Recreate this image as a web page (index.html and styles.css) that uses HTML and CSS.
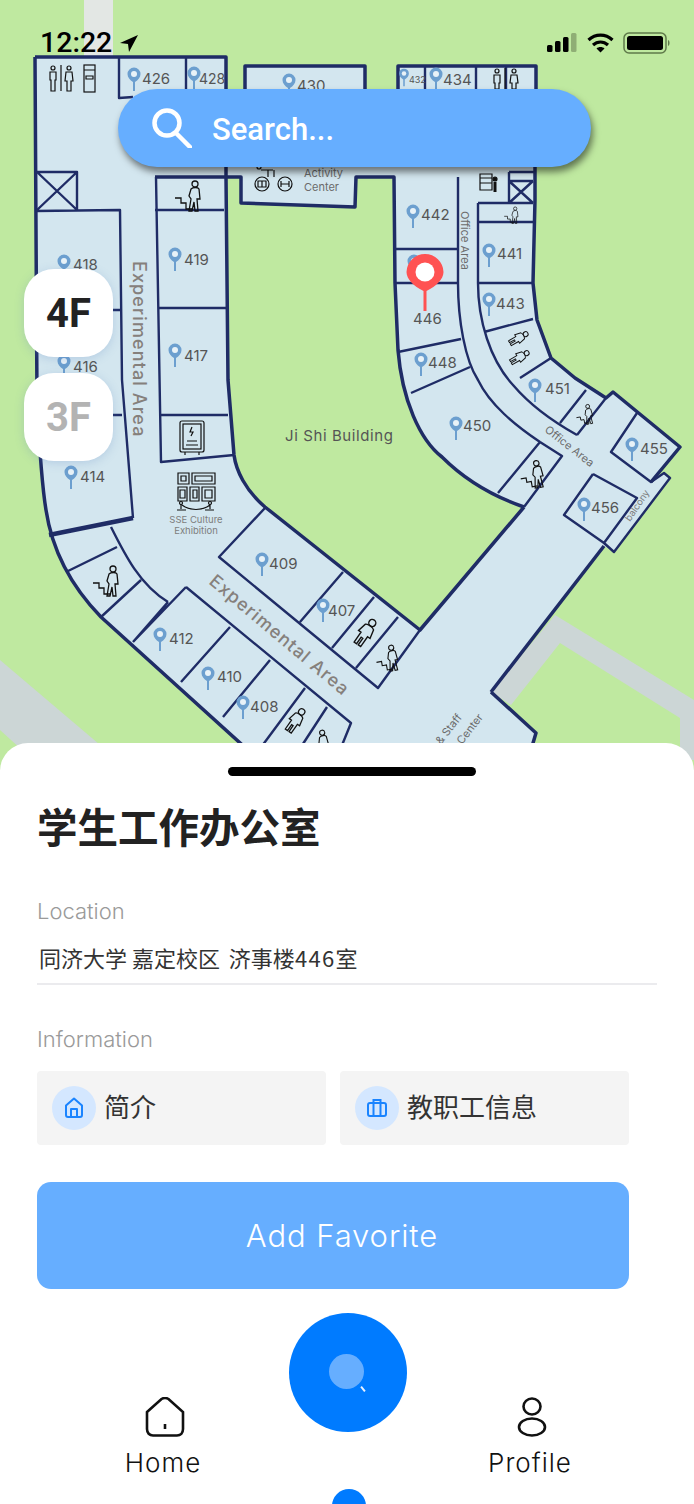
FILE: index.html
```html
<!DOCTYPE html>
<html lang="zh-CN">
<head>
    <meta charset="UTF-8">
    <meta name="viewport" content="width=device-width, initial-scale=1.0">
    <title>Ji Shi Building</title>
    <link rel="stylesheet" href="styles.css">
</head>
<body>
<div class="page">
    <div class="map-area">
        <svg class="map" width="694" height="770" viewBox="0 0 694 770">
            <defs>
                <g id="pin">
                    <path d="M0 -8.500a6.500 6.500 0 0 1 6.500 6.500c0 3.500-2.500 6-5.500 8v9h-2v-9c-3-2-5.500-4.500-5.500-8a6.500 6.500 0 0 1 6.500-6.500z" fill="#6c9fcf"/>
                    <circle cx="0" cy="-2" r="3" fill="#e8f2f8"/>
                </g>
                <g id="stairs" fill="none" stroke="#111" stroke-width="1.300">
                    <path d="M-16 6h6v5h5v6h6"/>
                    <circle cx="4" cy="-8" r="3"/>
                    <path d="M0 -3c2-2 7-2 8 0l1 10h-3l1 12h-3l-1-9-2 9h-3l2-12-2-3z"/>
                </g>
                <g id="person" fill="none" stroke="#111" stroke-width="1.400">
                    <circle cx="0" cy="-11" r="3.500"/>
                    <path d="M-5 -6c2-2 8-2 10 0l2 9h-3l0 12h-3v-8h-2v8h-3v-12h-3z"/>
                </g>
            </defs>

            <rect width="694" height="770" fill="#bfe9a0"/>
            <path d="M84 0h29v60h-29z" fill="#e3e7e4"/>
            <path d="M0 660l106 90h-84l-22-20z" fill="#ccd6d6"/>
            <path d="M555 615l139 85v60h-14v-42l-120-75-49 62-20-13z" fill="#ccd6d6"/>

            <!-- building -->
            <path class="floor" d="M35 57H226V120H245V66H365V120H398V66H536V200L533 283L537 320L551 358L575 378L606 398L613 392L680 447L651 482L664 473L670 478L614 552L604 546L491 692L536 733L525 770H270L101 617C70 585 52 550 46 510C41 480 39 440 37 400L35 57Z"/>
            <path d="M226 177H241V203L355 207L356 177H394L395 283L398 350C402 400 420 440 442 457C465 480 495 497 524 507L420 630L265 507C245 490 236 470 234 455C228 420 228 300 226 177Z" fill="#bfe9a0"/>
            <path d="M241 120H394V177H356L355 207L241 203V177H226V120Z" fill="#d3e6ef"/>

            <g class="wall">
                <path d="M35 57H226V100M245 100V66H365V100M398 100V66H536V100"/>
                <path d="M35 57L37 400C39 440 41 480 46 510C52 550 70 585 101 617L270 770"/>
                <path d="M226 100V177L228 380L234 455C236 470 245 490 265 507L420 630L524 507"/>
                <path d="M155 177H241V203L355 207L356 177H394L395 283L398 350C402 400 420 440 442 457C465 480 495 497 524 507"/>
                <path d="M535 165V200L533 283L537 320L551 358L575 378L606 398L613 392L680 447L651 482"/>
                <path d="M491 692L604 546M491 692L536 733L525 770"/>
                <path d="M49 535L133 518" stroke-width="4.500"/>
            </g>
            <g class="line">
                <path d="M119 58V98L133 97M186 58V90M425 66V90M476 66V90M506 66V90"/>
                <path d="M35 172H77V210M35 211L120 210L122 380L133 518M37 172L77 210M77 172L37 210M113 310H120M113 415H122"/>
                <path d="M156 177L161 462L234 455M155 210H224M159 308H226M160 415H228"/>
                <path d="M396 249H458M396 283H458M458 177V283C458 320 465 360 478 380C490 405 515 425 540 442L562 456L524 507M398 352L461 339M411 393L470 367M498 493L540 442"/>
                <path d="M509 172H535M509 181H533M509 172V203M478 203H533M509 181L533 203M533 181L509 203M478 203V283C478 320 490 360 513 385C530 405 550 420 577 435M478 222H533M478 283H533M484 332L533 319M520 378L551 358M560 423L586 390M577 435L606 398"/>
                <path d="M637 413L611 452L651 482L664 473L670 478L614 552L604 543M593 474L564 515L604 543L637 498L593 474"/>
                <path d="M265 508L219 557L378 688L420 630M343 572L300 622M374 597L332 648M398 617L356 668"/>
                <path d="M111 527C125 555 140 585 168 602M66 572L117 547M101 617L141 580M168 602L133 642M186 587L133 642M186 587L351 723L336 760M230 627L181 682M270 660L223 717M305 688L259 750M327 707L299 750"/>
            </g>

            <use href="#pin" x="134" y="76"/><use href="#pin" x="194" y="75"/><use href="#pin" x="289" y="82"/>
            <use href="#pin" transform="translate(404 75) scale(.75)"/><use href="#pin" x="436" y="76"/>
            <use href="#pin" x="413" y="213"/><use href="#pin" x="414" y="263"/><use href="#pin" x="489" y="252"/>
            <use href="#pin" x="489" y="301"/><use href="#pin" x="421" y="361"/><use href="#pin" x="64" y="263"/>
            <use href="#pin" x="64" y="363"/><use href="#pin" x="175" y="256"/><use href="#pin" x="175" y="352"/>
            <use href="#pin" x="535" y="387"/><use href="#pin" x="456" y="425"/><use href="#pin" x="632" y="446"/>
            <use href="#pin" x="584" y="506"/><use href="#pin" x="71" y="474"/><use href="#pin" x="262" y="561"/>
            <use href="#pin" x="323" y="607"/><use href="#pin" x="160" y="636"/><use href="#pin" x="208" y="675"/>
            <use href="#pin" x="243" y="704"/>

            <g class="room-no">
                <text x="142" y="84">426</text><text class="no-narrow" x="199" y="84">428</text><text x="297" y="91">430</text>
                <text class="no-tiny" x="409" y="83">432</text><text x="443" y="85">434</text><text x="421" y="220">442</text>
                <text x="413" y="324">446</text><text x="497" y="259">441</text><text x="496" y="309">443</text>
                <text x="428" y="368">448</text><text x="73" y="270">418</text><text x="73" y="372">416</text>
                <text x="184" y="265">419</text><text x="184" y="361">417</text><text x="545" y="394">451</text>
                <text x="463" y="431">450</text><text x="640" y="454">455</text><text x="591" y="513">456</text>
                <text x="80" y="482">414</text><text x="269" y="569">409</text><text x="328" y="616">407</text>
                <text x="169" y="644">412</text><text x="217" y="682">410</text><text x="250" y="712">408</text>
            </g>

            <text class="area-big" transform="translate(133 261) rotate(90)">Experimental Area</text>
            <text class="area-big" transform="translate(208 583) rotate(40)">Experimental Area</text>
            <text class="area-small" transform="translate(461 211) rotate(90)">Office Area</text>
            <text class="area-small" transform="translate(544 431) rotate(38)">Office Area</text>
            <text class="area-tiny" transform="translate(630 522) rotate(-56)">balcony</text>
            <text class="area-small" transform="translate(441 745) rotate(-52)">&amp; Staff</text>
            <text class="area-small" transform="translate(462 745) rotate(-52)">Center</text>
            <text class="area-name" x="285" y="441">Ji Shi Building</text>
            <text class="area-small" x="304" y="177">Activity</text>
            <text class="area-small" x="304" y="191">Center</text>
            <text class="area-tiny" x="196" y="523" text-anchor="middle">SSE Culture</text>
            <text class="area-tiny" x="196" y="534" text-anchor="middle">Exhibition</text>

            <!-- toilets at the top -->
            <g class="glyph">
                <circle cx="53" cy="68" r="2"/><path d="M50 72h6v8h-1v11h-4v-11h-1zM61 65v26"/>
                <circle cx="69" cy="68" r="2"/><path d="M66 72h6l1 9h-2v10h-4v-10h-2z"/>
                <rect x="84" y="65" width="11" height="27"/><path d="M84 70h11M86 76h7v3h-7z"/>
                <circle cx="497" cy="71" r="2"/><path d="M494 75h6v8h-1v6h-4v-6h-1zM505 68v22"/>
                <circle cx="514" cy="71" r="2"/><path d="M511 75h6l1 8h-2v6h-4v-6h-2z"/>
                <circle cx="259" cy="167" r="2"/><path d="M261 170h12M268 170v7M274 170v7"/>
                <circle cx="262" cy="184" r="7"/><circle cx="285" cy="184" r="7"/>
                <path d="M258 181h8v6h-8zM262 181v6M281 181v6M289 181v6M281 184h8"/>
                <path d="M480 174h12v16h-12zM480 178h12M480 183h12"/><circle cx="495" cy="179" r="2" fill="#111"/>
                <path d="M495 182v10" stroke-width="3"/>
                <rect x="180" y="421" width="24" height="31" rx="2"/><rect x="183" y="424" width="18" height="25"/>
                <path d="M192 427l-2 5h3l-2 4M187 441h10M186 445h12M185 452v3M199 452v3"/>
                <path d="M178 473h11v11h-11zM181 476h5v5h-5zM192 473h23v11h-23zM195 476h17v5h-17zM178 487h9v14h-9zM180 490h5v8h-5zM190 487h9v14h-9zM193 490h4v8h-4zM202 487h13v14h-13zM205 490h7v8h-7z"/>
                <path d="M181 509v-5M210 509v-5M182 505c8 6 20 6 28 0M177 510h9M205 510h9"/><circle cx="181" cy="503" r="1.500"/><circle cx="210" cy="503" r="1.500"/>
            </g>
            <use href="#stairs" x="191" y="192"/>
            <use href="#stairs" transform="translate(513 213) scale(.55)"/>
            <use href="#stairs" x="109" y="577"/>
            <use href="#stairs" transform="translate(586 412) rotate(-10) scale(.65)"/>
            <use href="#stairs" transform="translate(534 471) rotate(-10) scale(.9)"/>
            <use href="#stairs" transform="translate(389 655) rotate(-10) scale(.85)"/>
            <use href="#stairs" transform="translate(320 740) rotate(-10) scale(.85)"/>
            <use href="#person" transform="translate(366 632) rotate(35)"/>
            <use href="#person" transform="translate(296 720) rotate(35) scale(.9)"/>
            <use href="#person" transform="translate(519 338) rotate(60) scale(.7)"/>
            <use href="#person" transform="translate(520 357) rotate(60) scale(.7)"/>

            <path d="M425 254a18.500 18.500 0 0 1 18.500 18c0 7-7 14-17 19v20h-3v-20c-10-5-17-12-17-19a18.500 18.500 0 0 1 18.500-18z" fill="#ff5252"/>
            <circle cx="425" cy="272" r="9.500" fill="#fff"/>
        </svg>

        <div class="status-bar">
            <div class="clock">12:22
                <svg width="20" height="20" viewBox="0 0 20 20"><path d="M19 2L1 10l8 1 1 8z" fill="#000"/></svg>
            </div>
            <div class="status-icons">
                <svg width="31" height="20" viewBox="0 0 31 20">
                    <rect x="0" y="12" width="5.500" height="7" rx="1.500"/><rect x="8" y="8" width="5.500" height="11" rx="1.500"/>
                    <rect x="16" y="4" width="5.500" height="15" rx="1.500"/><rect x="24" y="0" width="5.500" height="19" rx="1.500" fill="#8fae75"/>
                </svg>
                <svg width="27" height="20" viewBox="0 0 27 20" fill="none" stroke="#000" stroke-width="3.200">
                    <path d="M1.500 7c7-6.500 17-6.500 24 0M6 12c4.500-4 10.500-4 15 0"/>
                    <path d="M13.500 19.500l-4-4c2-2 6-2 8 0z" fill="#000" stroke="none"/>
                </svg>
                <svg width="48" height="22" viewBox="0 0 48 22">
                    <rect x="1" y="1" width="42" height="20" rx="5" fill="none" stroke="#5f7a4a" stroke-width="1.500"/>
                    <rect x="4" y="4" width="36" height="14" rx="2.500"/>
                    <path d="M45 8c2 .5 2 5.500 0 6z" fill="#5f7a4a"/>
                </svg>
            </div>
        </div>

        <div class="search-bar">
            <svg width="40" height="40" viewBox="0 0 40 40" fill="none" stroke="#fff" stroke-width="4.500">
                <circle cx="15" cy="15" r="12.500"/><path d="M24 25l14 14" stroke-linecap="round"/>
            </svg>
            <span class="search-text">Search...</span>
        </div>

        <div class="floor-list">
            <div class="floor-btn active">4F</div>
            <div class="floor-btn">3F</div>
        </div>
    </div>

    <div class="sheet">
        <div class="grabber"></div>
        <h1>学生工作办公室</h1>

        <div class="label">Location</div>
        <div class="location">同济大学 嘉定校区 <span class="loc-room">济事楼<span class="loc-num">446</span>室</span></div>

        <div class="label label-info">Information</div>
        <div class="info-row">
            <div class="info-card">
                <span class="info-icon">
                    <svg width="20" height="22" viewBox="0 0 20 22" fill="none" stroke="#1a84ff" stroke-width="2" stroke-linejoin="round">
                        <path d="M2 8.500L10 1.500l8 7V18a2 2 0 0 1-2 2H4a2 2 0 0 1-2-2zM7 20v-8h6v8"/>
                    </svg>
                </span>
                <span class="info-text">简介</span>
            </div>
            <div class="info-card">
                <span class="info-icon">
                    <svg width="20" height="20" viewBox="0 0 20 20" fill="none" stroke="#1a84ff" stroke-width="2">
                        <rect x="1" y="5" width="18" height="13" rx="2"/><path d="M6.500 18V2h7v16"/>
                    </svg>
                </span>
                <span class="info-text">教职工信息</span>
            </div>
        </div>

        <button class="favorite">Add Favorite</button>

        <nav class="tabbar">
            <div class="tab">
                <svg class="tab-icon-home" width="40" height="40" viewBox="0 0 40 40" fill="none" stroke="#111" stroke-width="2.600">
                    <path d="M2 15L16.500 2c2-1.200 5-1.200 7 0L38 15v17c0 4-2.500 6.500-6 6.500H8c-3.500 0-6-2.500-6-6.500zM20 27v5"/>
                </svg>
                <span>Home</span>
            </div>
            <div class="fab">
                <span class="fab-dot"></span>
                <span class="fab-tick"></span>
            </div>
            <div class="tab">
                <svg class="tab-icon-profile" width="40" height="40" viewBox="0 0 40 40" fill="none" stroke="#111" stroke-width="2.600">
                    <ellipse cx="20" cy="9.500" rx="8.500" ry="8"/><ellipse cx="20" cy="30" rx="13" ry="8.500"/>
                </svg>
                <span>Profile</span>
            </div>
        </nav>
        <span class="home-dot"></span>
    </div>
</div>
</body>
</html>
```

FILE: styles.css
```css
body {
    margin: 0;
    padding: 0;
    background: #fff;
    font-family: "Inter", "Noto Sans CJK SC", sans-serif;
}

.page {
    position: relative;
    width: 694px;
    height: 1504px;
    overflow: hidden;
}

.map-area {
    position: relative;
    height: 743px;
}

.map {
    position: absolute;
    top: 0;
    left: 0;
}

.floor {
    fill: #d3e6ef;
}

.wall, .line {
    fill: none;
    stroke: #1f2c66;
    stroke-linejoin: round;
}

.wall {
    stroke-width: 3.500;
}

.line {
    stroke-width: 2.400;
}

.glyph {
    fill: none;
    stroke: #111;
    stroke-width: 1.200;
}

.room-no text {
    font-family: "Inter", sans-serif;
    font-size: 15px;
    fill: #555;
}

.room-no .no-narrow {
    font-size: 14px;
}

.room-no .no-tiny {
    font-size: 9px;
}

.area-big {
    font-size: 18px;
    font-weight: 500;
    fill: #85807c;
    letter-spacing: 1.100px;
}

.area-small {
    font-size: 11px;
    fill: #6b6b6b;
}

.area-tiny {
    font-size: 9.500px;
    fill: #7d7d7d;
}

.area-name {
    font-size: 15px;
    fill: #555;
    letter-spacing: 0.6px;
}

.status-bar {
    position: absolute;
    top: 26px;
    left: 40px;
    right: 23px;
    display: flex;
    justify-content: space-between;
    align-items: center;
}

.clock {
    display: flex;
    align-items: center;
    gap: 7px;
    font-family: "Roboto", sans-serif;
    font-size: 28.500px;
    font-weight: 500;
    color: #000;
}

.status-icons {
    display: flex;
    align-items: center;
    gap: 9px;
}

.search-bar {
    position: absolute;
    top: 89px;
    left: 118px;
    width: 473px;
    height: 78px;
    box-sizing: border-box;
    padding-left: 34px;
    display: flex;
    align-items: center;
    gap: 20px;
    background: #66aeff;
    border-radius: 39px;
    box-shadow: 2px 5px 7px rgba(0, 0, 0, 0.5);
    color: #fff;
    font-family: "Roboto", sans-serif;
    font-size: 31px;
    font-weight: 500;
}

.search-text {
    padding-top: 3px;
}

.floor-list {
    position: absolute;
    top: 269px;
    left: 24px;
    display: flex;
    flex-direction: column;
    gap: 16px;
}

.floor-btn {
    width: 89px;
    height: 88px;
    display: flex;
    align-items: center;
    justify-content: center;
    background: #fff;
    border-radius: 30px;
    box-shadow: 0 2px 10px rgba(90, 130, 190, 0.25);
    font-family: "Roboto", sans-serif;
    font-size: 40px;
    font-weight: 700;
    color: #b3b3b3;
}

.floor-btn.active {
    color: #222;
}

.sheet {
    position: relative;
    height: 761px;
    box-sizing: border-box;
    padding: 24px 37px 0;
    background: #fff;
    border-radius: 28px 28px 0 0;
}

.grabber {
    width: 248px;
    height: 9px;
    margin-left: 191px;
    background: #000;
    border-radius: 5px;
}

h1 {
    margin: 22px 0 0;
    font-family: "Noto Sans CJK SC", sans-serif;
    font-size: 40.500px;
    line-height: 56px;
    font-weight: 700;
    color: #222;
}

.label {
    margin-top: 42px;
    font-size: 22px;
    line-height: 30px;
    font-weight: 300;
    color: #9a9a9a;
}

.location {
    width: 620px;
    box-sizing: border-box;
    margin-top: 15px;
    padding: 0 0 10px 2px;
    border-bottom: 2px solid #ebebee;
    font-family: "Noto Sans CJK SC", sans-serif;
    font-size: 22px;
    line-height: 32px;
    color: #333;
}

.loc-room {
    margin-left: 4px;
}

.loc-num {
    letter-spacing: 1.300px;
}

.label-info {
    margin-top: 39px;
}

.info-row {
    display: flex;
    gap: 14px;
    margin-top: 17px;
}

.info-card {
    width: 289px;
    height: 74px;
    box-sizing: border-box;
    padding-left: 15px;
    display: flex;
    align-items: center;
    gap: 8px;
    background: #f4f4f4;
    border-radius: 4px;
    font-family: "Noto Sans CJK SC", sans-serif;
    font-size: 26px;
    color: #333;
}

.info-text {
    margin-top: -5px;
}

.info-icon {
    width: 44px;
    height: 44px;
    display: flex;
    align-items: center;
    justify-content: center;
    background: #d4e7ff;
    border-radius: 50%;
}

.favorite {
    display: block;
    width: 592px;
    height: 107px;
    margin-top: 37px;
    padding: 0 0 0 18px;
    background: #66aeff;
    border: none;
    border-radius: 14px;
    font-family: "Inter", sans-serif;
    font-size: 31px;
    font-weight: 300;
    letter-spacing: 0.9px;
    color: #fff;
}

.tabbar {
    display: flex;
    align-items: flex-start;
    margin: 24px 0 0 46px;
}

.tab {
    width: 160px;
    margin-top: 84px;
    display: flex;
    flex-direction: column;
    align-items: center;
    gap: 10px;
    font-size: 26px;
    font-weight: 300;
    letter-spacing: 1px;
    color: #111;
}

.tab-icon-home,
.tab-icon-profile {
    margin-left: 3px;
}

.fab {
    position: relative;
    width: 118px;
    height: 119px;
    margin: 0 43px 0 46px;
    background: #007bff;
    border-radius: 50%;
}

.fab-dot {
    position: absolute;
    top: 41px;
    left: 40px;
    width: 35px;
    height: 35px;
    background: #66aeff;
    border-radius: 50%;
}

.fab-tick {
    position: absolute;
    top: 73px;
    left: 73px;
    width: 2px;
    height: 6px;
    background: #e8f2ff;
    transform: rotate(-40deg);
}

.home-dot {
    position: absolute;
    top: 746px;
    left: 332px;
    width: 34px;
    height: 34px;
    background: #007bff;
    border-radius: 50%;
}
```
